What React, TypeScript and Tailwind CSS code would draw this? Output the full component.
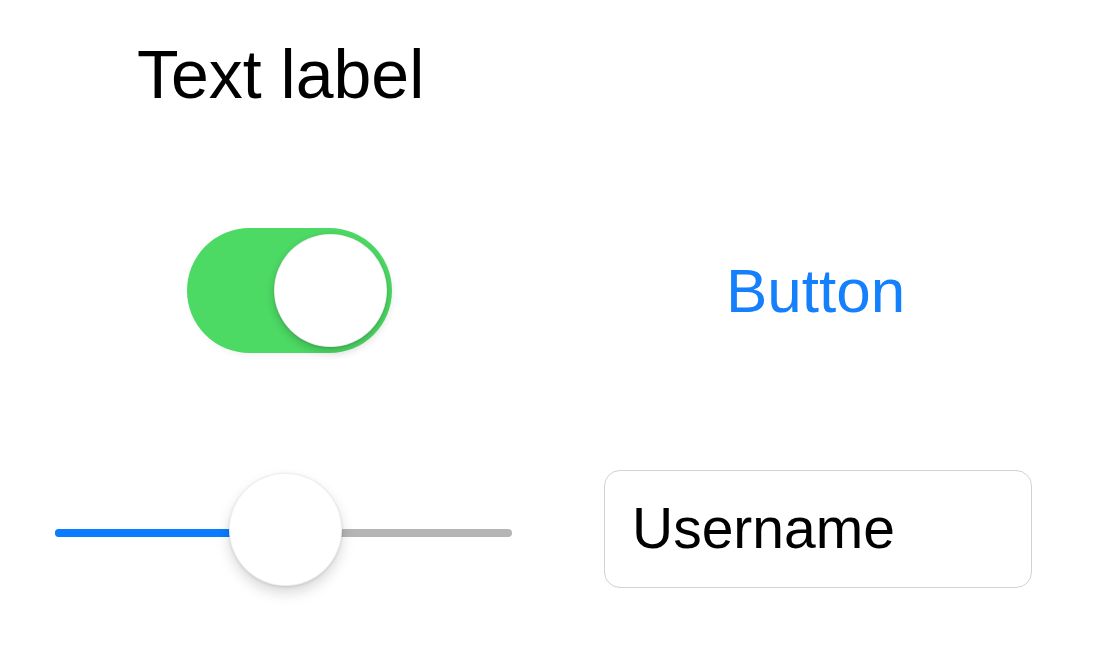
import React from "react";

export default function App() {
  return (
    <div className="w-[1100px] h-[649px] bg-white overflow-hidden flex flex-col font-['Liberation_Sans',Arial,sans-serif] text-black">
      <div className="pt-[40px] pl-[137px]">
        <div className="text-[68px] leading-none h-[67px]">Text label</div>
      </div>

      <div className="mt-[121px] flex items-start">
        <div className="ml-[187px] w-[205px] h-[125px] rounded-full bg-[#4cd964] flex items-center justify-end pr-[5px] shadow-[2px_4px_6px_rgba(0,0,0,0.04)]">
          <div className="w-[113px] h-[113px] rounded-full bg-white border border-[rgba(0,0,0,0.06)] shadow-[0_4px_9px_rgba(0,0,0,0.18),0_1px_2px_rgba(0,0,0,0.12)]" />
        </div>
        <div className="ml-[334px] mt-[32px] text-[62px] leading-none h-[62px] text-[#1580fb]">Button</div>
      </div>

      <div className="mt-[117px] flex items-start">
        <div className="ml-[55px] mt-[3px] relative w-[457px] h-[113px]">
          <div className="absolute left-0 right-0 top-[56px] h-[8px] rounded-full bg-[#b5b5b5]" />
          <div className="absolute left-0 w-[190px] top-[56px] h-[8px] rounded-full bg-[#0b7bff]" />
          <div className="absolute left-[174px] top-0 w-[113px] h-[113px] rounded-full bg-white border border-[rgba(0,0,0,0.06)] shadow-[0_7px_14px_rgba(0,0,0,0.15),0_1px_3px_rgba(0,0,0,0.12)]" />
        </div>
        <div className="ml-[92px] w-[428px] h-[118px] rounded-[16px] border border-[#d2d2d2] bg-white flex items-center pl-[27px] pb-[2px]">
          <span className="text-[57px] leading-none">Username</span>
        </div>
      </div>
    </div>
  );
}
